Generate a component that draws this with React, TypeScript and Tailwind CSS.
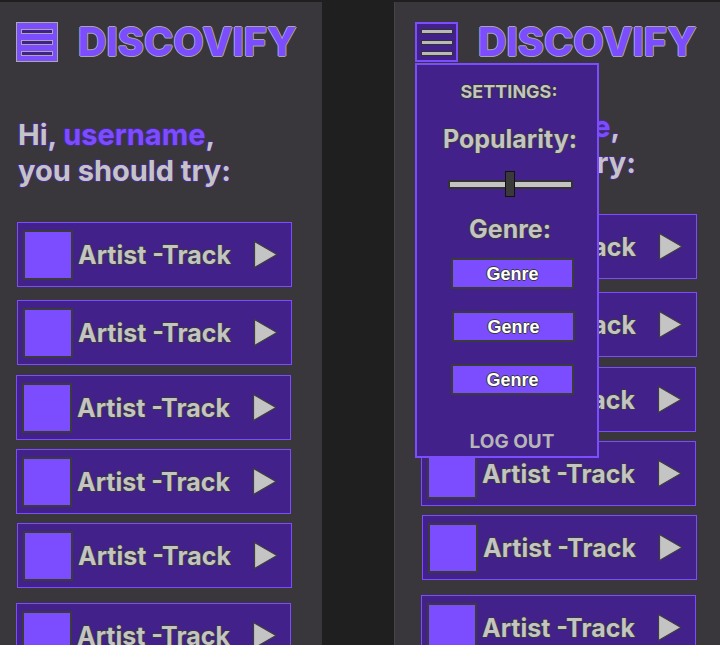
import React from "react";

const FONT = "font-['Inter','Noto_Sans',sans-serif]";
const GRAY_OUTLINE =
  "[text-shadow:1px_0_#3a3a3a,-1px_0_#3a3a3a,0_1px_#3a3a3a,0_-1px_#3a3a3a]";
const PURPLE_OUTLINE =
  "[text-shadow:1px_0_#4a2a99,-1px_0_#4a2a99,0_1px_#4a2a99,0_-1px_#4a2a99]";

// top gap and left nudge of each card, as in the mockup
const CARDS = [
  { mt: 0, ml: 0 },
  { mt: 13, ml: 0 },
  { mt: 10, ml: -1 },
  { mt: 9, ml: -1 },
  { mt: 9, ml: 0 },
  { mt: 15, ml: -1 },
];

function Burger({ open }: { open: boolean }) {
  return (
    <div
      className={`flex h-[40px] shrink-0 flex-col items-center justify-center gap-[6px] ${
        open
          ? "w-[43px] border-2 border-[#7c4dff] bg-[#42218b]"
          : "w-[42px] border border-[#a9a9a9] bg-[#7c4dff]"
      }`}
    >
      {[0, 1, 2].map((i) => (
        <div
          key={i}
          className={`h-[5px] w-[32px] border ${
            open ? "border-[#333] bg-[#b9b9b9]" : "border-[#a9a9a9] bg-[#42218b]"
          }`}
        />
      ))}
    </div>
  );
}

function Play() {
  return (
    <svg width="26" height="29" viewBox="0 0 26 29" className="shrink-0">
      <path d="M1.5 1.5 L24 14.5 L1.5 27.5 Z" fill="#c4c4c4" stroke="#3e3e3e" strokeWidth="1.2" />
    </svg>
  );
}

function TrackCard({ mt, ml }: { mt: number; ml: number }) {
  return (
    <div
      className="flex h-[65px] w-[275px] items-center border border-[#7c4dff] bg-[#42218b] pl-[5px] pr-[12px]"
      style={{ marginTop: mt, marginLeft: ml }}
    >
      <div className="h-[50px] w-[50px] shrink-0 border-2 border-[#3b3b3b] bg-[#7c4dff]" />
      <span
        className={`ml-[5px] flex-1 whitespace-nowrap text-[25px] font-bold leading-[30px] text-[#c4c4c4] ${GRAY_OUTLINE}`}
      >
        Artist -Track
      </span>
      <Play />
    </div>
  );
}

function GenreButton({ ml }: { ml: number }) {
  return (
    <div
      className="flex h-[31px] w-[123px] items-center justify-center border-2 border-[#3b3b3b] bg-[#7c4dff]"
      style={{ marginLeft: ml }}
    >
      <span
        className={`font-['Liberation_Sans',Arial,sans-serif] text-[18px] font-bold leading-none text-white ${GRAY_OUTLINE}`}
      >
        Genre
      </span>
    </div>
  );
}

function SettingsMenu() {
  return (
    <div className="absolute left-[20px] top-[61px] flex h-[395px] w-[184px] flex-col border-2 border-[#7c4dff] bg-[#42218b] pl-[6px]">
      <div className="mt-[17px] pr-[2px] text-center text-[18px] font-bold leading-[20px] text-[#c4c4c4] [text-shadow:1px_0_#333,-1px_0_#333,0_1px_#333,0_-1px_#333]">
        SETTINGS:
      </div>
      <div className={`mt-[22px] text-center text-[25px] font-bold leading-[30px] text-[#c4c4c4] ${GRAY_OUTLINE}`}>
        Popularity:
      </div>
      <div className="relative mx-auto mt-[17px] h-[26px] w-[125px]">
        <div className="absolute left-0 right-0 top-[9px] h-[9px] border-2 border-[#333] bg-[#c4c4c4]" />
        <div className="absolute left-[57px] top-0 h-[26px] w-[10px] border border-[#111] bg-[#3a3a3a]" />
      </div>
      <div className={`mt-[17px] text-center text-[25px] font-bold leading-[30px] text-[#c4c4c4] ${GRAY_OUTLINE}`}>
        Genre:
      </div>
      <div className="mt-[14px] flex flex-col gap-[22px]">
        <GenreButton ml={28} />
        <GenreButton ml={29} />
        <GenreButton ml={28} />
      </div>
      <div className="mt-[35px] pl-[4px] text-center text-[19px] font-bold leading-[24px] text-[#b6b6b6]">
        LOG OUT
      </div>
    </div>
  );
}

function Phone({
  open,
  headerPl,
  contentPl,
  greetMt,
  className,
}: {
  open: boolean;
  headerPl: number;
  contentPl: number;
  greetMt: number;
  className: string;
}) {
  return (
    <div className={`relative h-[643px] shrink-0 overflow-hidden bg-[#39373c] ${FONT} ${className}`}>
      <header className="flex items-center pt-[20px]" style={{ paddingLeft: headerPl }}>
        <Burger open={open} />
        <h1 className="ml-[20px] text-[39.5px] font-extrabold leading-[40px] text-[#7c4dff] [text-shadow:1px_0_#a6a6a6,-1px_0_#a6a6a6,0_1px_#a6a6a6,0_-1px_#a6a6a6]">
          DISCOVIFY
        </h1>
      </header>

      <div style={{ paddingLeft: contentPl }}>
        <p
          className={`pl-[1px] text-[29px] font-bold leading-[36px] text-[#c4c4c4] ${PURPLE_OUTLINE}`}
          style={{ marginTop: greetMt }}
        >
          Hi, <span className="text-[#7c4dff]">username</span>,
          <br />
          you should try:
        </p>
        <div className="mt-[33px] flex flex-col">
          {CARDS.map((c, i) => (
            <TrackCard key={i} mt={c.mt} ml={c.ml} />
          ))}
        </div>
      </div>

      {open && <SettingsMenu />}
    </div>
  );
}

export default function App() {
  return (
    <div className="flex h-[645px] w-[720px] overflow-hidden bg-[#1f1f1f] pt-[2px]">
      <Phone open={false} headerPl={16} contentPl={17} greetMt={55} className="w-[322px]" />
      <Phone
        open
        headerPl={20}
        contentPl={27}
        greetMt={47}
        className="ml-[72px] w-[330px] border-l border-[#46444a]"
      />
    </div>
  );
}
